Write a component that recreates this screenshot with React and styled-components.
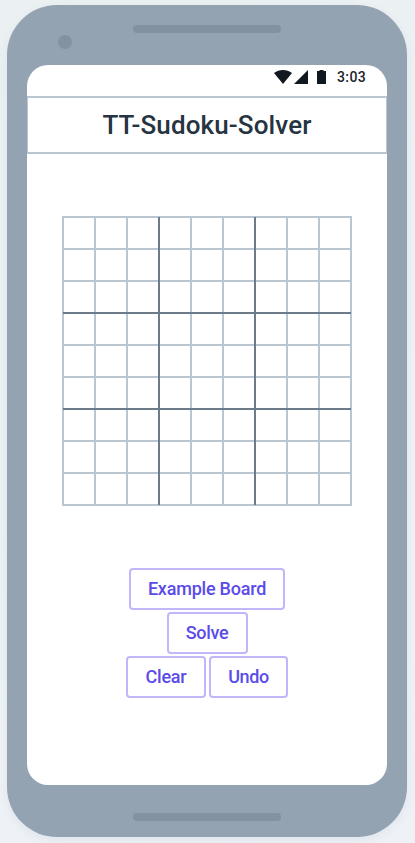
import React from "react";
import styled, { createGlobalStyle } from "styled-components";

const GlobalStyle = createGlobalStyle`
  * { box-sizing: border-box; }
  body { margin: 0; background: #ebf0f4; font-family: Roboto, "Liberation Sans", sans-serif; }
`;

const Page = styled.main`
  height: 843px;
  padding: 5px 8px 6px 7px;
  overflow: hidden;
  background: linear-gradient(170deg, #ebf1f3, #eef2f7);
`;

const Phone = styled.div`
  position: relative;
  display: flex;
  flex-direction: column;
  align-items: center;
  width: 400px;
  height: 832px;
  border-radius: 50px;
  background: #94a3b2;
  box-shadow: 0 3px 10px rgba(60, 80, 100, 0.08);
`;

const Speaker = styled.div`
  flex: none;
  width: 148px;
  height: 8px;
  margin-top: ${(p) => p.$top}px;
  border-radius: 4px;
  background: #8392a0;
`;

const Camera = styled.div`
  position: absolute;
  left: 51px;
  top: 30px;
  width: 14px;
  height: 14px;
  border-radius: 50%;
  background: #8392a0;
`;

const Screen = styled.div`
  display: flex;
  flex: none;
  flex-direction: column;
  align-items: center;
  width: 360px;
  height: 720px;
  margin-top: 32px;
  border-radius: 21px;
  overflow: hidden;
  background: #fff;
`;

const StatusBar = styled.div`
  display: flex;
  flex: none;
  align-items: flex-start;
  justify-content: flex-end;
  width: 360px;
  height: 31px;
  padding: 5px 20px 0 0;
`;

const StatusIcons = styled.svg`
  width: 54px;
  height: 14px;
  margin-right: 10px;
  fill: #111820;
`;

const Clock = styled.span`
  width: 30px;
  font-size: 14px;
  font-weight: 500;
  line-height: 15px;
  letter-spacing: 0.4px;
  color: #1b232c;
`;

const Header = styled.header`
  flex: none;
  width: 362px;
  height: 58px;
  border: 2px solid #bac7d3;
  display: flex;
  align-items: center;
  justify-content: center;
`;

const Title = styled.h1`
  margin: 0;
  font-size: 26px;
  font-weight: 500;
  line-height: 30px;
  white-space: nowrap;
  letter-spacing: 0.13px;
  color: #263442;
`;

const Board = styled.div`
  position: relative;
  display: grid;
  flex: none;
  grid-template: repeat(9, 30px) / repeat(9, 30px);
  gap: 2px;
  margin-top: 62px;
  border: 2px solid #bac7d3;
  background: #bac7d3;
`;

const Cell = styled.div`
  background: #fff;
`;

const Divider = styled.div`
  position: absolute;
  background: #6c7b8a;
  ${(p) =>
    p.$vertical
      ? `left: ${p.$at}px; top: -1px; width: 2px; height: 288px;`
      : `top: ${p.$at}px; left: -1px; height: 2px; width: 288px;`}
`;

const Actions = styled.div`
  display: flex;
  flex-direction: column;
  align-items: center;
  gap: 2px;
  margin-top: 62px;
`;

const ActionRow = styled.div`
  display: flex;
  gap: 3px;
`;

const Button = styled.button`
  width: ${(p) => p.$width}px;
  height: 42px;
  padding: 0;
  border: 2px solid #bfb7fa;
  border-radius: 4px;
  background: #fff;
  color: #5b4be8;
  font: 500 18px/22px Roboto, "Liberation Sans", sans-serif;
  letter-spacing: ${(p) => p.$tracking}px;
  white-space: nowrap;
`;

const cells = Array.from({ length: 81 }, (_, i) => i);

export default function App() {
  return (
    <Page>
      <GlobalStyle />
      <Phone>
        <Camera />
        <Speaker $top={20} />
        <Screen>
          <StatusBar>
            <StatusIcons viewBox="0 0 54 14">
              <path d="M1 3C6-1 14-1 19 3L10 14Z" />
              <path d="M21 14L35 0V14Z" />
              <path d="M44 1H46.5V0H50.5V1H53V14H44Z" />
            </StatusIcons>
            <Clock>3:03</Clock>
          </StatusBar>
          <Header>
            <Title>TT-Sudoku-Solver</Title>
          </Header>
          <Board>
            {cells.map((i) => (
              <Cell key={i} />
            ))}
            <Divider $vertical $at={94} />
            <Divider $vertical $at={190} />
            <Divider $at={94} />
            <Divider $at={190} />
          </Board>
          <Actions>
            <Button $width={156} $tracking={-0.22}>Example Board</Button>
            <Button $width={81} $tracking={-0.3}>Solve</Button>
            <ActionRow>
              <Button $width={80} $tracking={-0.2}>Clear</Button>
              <Button $width={79} $tracking={-0.4}>Undo</Button>
            </ActionRow>
          </Actions>
        </Screen>
        <Speaker $top={28} />
      </Phone>
    </Page>
  );
}
